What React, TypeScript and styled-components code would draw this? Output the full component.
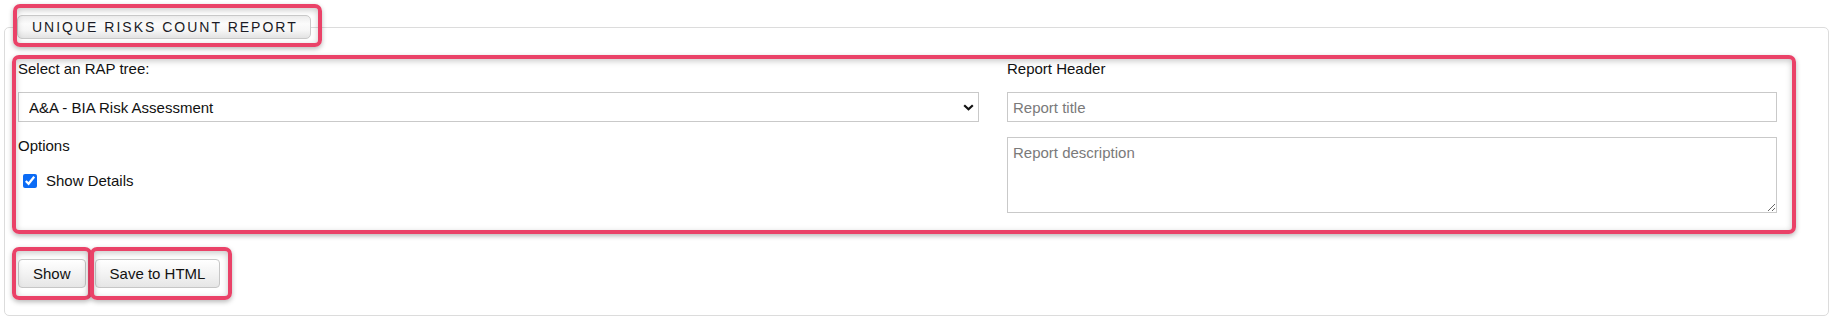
import styled, { createGlobalStyle } from "styled-components";

const GlobalStyle = createGlobalStyle`
  html, body {
    margin: 0;
    padding: 0;
    background: #ffffff;
  }
  body {
    font-family: "Liberation Sans", Arial, Helvetica, sans-serif;
    font-size: 15px;
    color: #111111;
  }
  * {
    box-sizing: border-box;
  }
`;

const Page = styled.div`
  padding: 15px 4px 6px;
`;

const Panel = styled.fieldset`
  margin: 0;
  min-width: 0;
  padding: 21px 13px 27px;
  border: 1px solid #dcdcdc;
  border-radius: 5px;
`;

const Legend = styled.legend`
  position: relative;
  margin-left: -1px;
  padding: 0 12px 0 14px;
  height: 24px;
  line-height: 22px;
  font-size: 14px;
  letter-spacing: 2px;
  text-transform: uppercase;
  color: #1b1b24;
  border: 1px solid #cacaca;
  border-radius: 5px;
  background: linear-gradient(
    to bottom,
    #ececec 0%,
    #fbfbfb 35%,
    #f6f6f6 65%,
    #e3e3e3 100%
  );
`;

/* red annotation frame that sits over a part of the form */
const Highlight = styled.span<{ $t: number; $r: number; $b: number; $l: number }>`
  position: absolute;
  top: ${(p) => -p.$t}px;
  right: ${(p) => -p.$r}px;
  bottom: ${(p) => -p.$b}px;
  left: ${(p) => -p.$l}px;
  border: 4px solid #ea4268;
  border-radius: 7px;
  box-shadow: 0 2px 5px rgba(0, 0, 0, 0.28), inset 0 2px 6px rgba(0, 0, 0, 0.22);
  pointer-events: none;
`;

const FormGrid = styled.div`
  position: relative;
  display: grid;
  width: max-content;
  grid-template-columns: 961px 770px;
  column-gap: 28px;
  margin-bottom: 46px;
`;

const Column = styled.div`
  display: flex;
  flex-direction: column;
`;

const FieldLabel = styled.div<{ $gap?: number }>`
  line-height: 17px;
  margin-top: ${(p) => p.$gap ?? 0}px;
  color: #111;
`;

const SelectWrap = styled.div`
  position: relative;
  margin-top: 15px;
`;

const Select = styled.select`
  display: block;
  width: 100%;
  height: 30px;
  padding: 0 28px 0 10px;
  font: inherit;
  color: #111;
  background: #fff;
  border: 1px solid #c9c9c9;
  border-radius: 0;
  appearance: none;
  outline: none;
`;

const Chevron = styled.svg`
  position: absolute;
  right: 5px;
  top: 12px;
  pointer-events: none;
`;

const TextInput = styled.input`
  display: block;
  width: 100%;
  height: 30px;
  margin-top: 15px;
  padding: 0 5px;
  font: inherit;
  color: #111;
  border: 1px solid #c9c9c9;
  border-radius: 0;
  outline: none;
  &::placeholder {
    color: #7a7a7a;
  }
`;

const TextArea = styled.textarea`
  display: block;
  width: 100%;
  height: 76px;
  margin-top: 15px;
  padding: 6px 5px;
  font: inherit;
  line-height: 17px;
  color: #111;
  border: 1px solid #c9c9c9;
  border-radius: 0;
  outline: none;
  &::placeholder {
    color: #7a7a7a;
  }
`;

const CheckRow = styled.label`
  display: flex;
  align-items: center;
  gap: 9px;
  margin-top: 18px;
  padding-left: 5px;
  line-height: 17px;
`;

const Check = styled.input`
  width: 14px;
  height: 14px;
  margin: 0;
  accent-color: #0b6bf5;
`;

const ButtonRow = styled.div`
  display: flex;
  gap: 9px;
`;

const ButtonSlot = styled.span`
  position: relative;
  display: inline-flex;
`;

const Button = styled.button`
  height: 29px;
  padding: 0 14px;
  font: inherit;
  line-height: 27px;
  color: #111;
  border: 1px solid #c6c6c6;
  border-radius: 4px;
  background: linear-gradient(to bottom, #ffffff 0%, #f3f3f3 50%, #e6e6e6 100%);
  cursor: pointer;
`;

export default function App() {
  return (
    <>
      <GlobalStyle />
      <Page>
        <Panel>
          <Legend>
            Unique Risks Count Report
            <Highlight $t={12} $r={12} $b={9} $l={5} />
          </Legend>

          <FormGrid>
            <Column>
              <FieldLabel>Select an RAP tree:</FieldLabel>
              <SelectWrap>
                <Select defaultValue="bia">
                  <option value="bia">A&amp;A - BIA Risk Assessment</option>
                </Select>
                <Chevron width="11" height="7" viewBox="0 0 11 7">
                  <path d="M1.2 1.2 L5.5 5.3 L9.8 1.2" fill="none" stroke="#111" strokeWidth="2.2" />
                </Chevron>
              </SelectWrap>
              <FieldLabel $gap={15}>Options</FieldLabel>
              <CheckRow>
                <Check type="checkbox" defaultChecked />
                Show Details
              </CheckRow>
            </Column>

            <Column>
              <FieldLabel>Report Header</FieldLabel>
              <TextInput type="text" placeholder="Report title" />
              <TextArea placeholder="Report description" />
            </Column>

            <Highlight $t={5} $r={19} $b={21} $l={6} />
          </FormGrid>

          <ButtonRow>
            <ButtonSlot>
              <Button type="button">Show</Button>
              <Highlight $t={12} $r={6} $b={12} $l={6} />
            </ButtonSlot>
            <ButtonSlot>
              <Button type="button">Save to HTML</Button>
              <Highlight $t={12} $r={12} $b={12} $l={5} />
            </ButtonSlot>
          </ButtonRow>
        </Panel>
      </Page>
    </>
  );
}
